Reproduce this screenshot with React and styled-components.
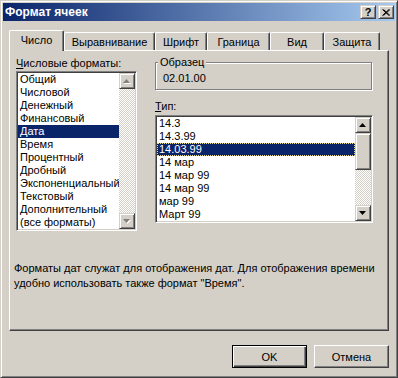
import React from "react";
import styled, { createGlobalStyle } from "styled-components";

const GlobalStyle = createGlobalStyle`
  html, body {
    margin: 0;
    padding: 0;
    background: #d4d0c8;
  }
  body {
    font-family: "Liberation Sans", Arial, sans-serif;
    font-size: 11px;
    color: #000;
  }
  * {
    box-sizing: border-box;
  }
`;

const Window = styled.div`
  width: 398px;
  height: 378px;
  background: #d4d0c8;
  border: 1px solid;
  border-color: #d4d0c8 #404040 #404040 #d4d0c8;
  box-shadow: inset 1px 1px 0 #fff, inset -1px -1px 0 #808080;
  padding: 2px;
  display: flex;
  flex-direction: column;
`;

const TitleBar = styled.div`
  height: 18px;
  display: flex;
  align-items: center;
  padding: 0 1px 0 2px;
  background: linear-gradient(to right, #0a246a, #a6caf0);
  color: #fff;
  font-weight: bold;
`;

const Title = styled.span`
  flex: 1;
  font-size: 12px;
  line-height: 13px;
`;

const CaptionButtons = styled.div`
  display: flex;
  gap: 2px;
`;

const CaptionButton = styled.div`
  width: 16px;
  height: 14px;
  display: flex;
  align-items: center;
  justify-content: center;
  background: #d4d0c8;
  color: #000;
  font-weight: bold;
  font-size: 11px;
  line-height: 11px;
  border: 1px solid;
  border-color: #d4d0c8 #404040 #404040 #d4d0c8;
  box-shadow: inset 1px 1px 0 #fff, inset -1px -1px 0 #808080;
`;

const Body = styled.div`
  flex: 1;
  display: flex;
  flex-direction: column;
  padding: 9px 6px 0;
`;

const TabStrip = styled.div`
  display: flex;
  align-items: flex-end;
  height: 20px;
`;

const Tab = styled.div`
  width: ${(p) => p.$w}px;
  height: ${(p) => (p.$active ? 21 : 18)}px;
  margin-bottom: ${(p) => (p.$active ? -1 : 0)}px;
  position: relative;
  z-index: ${(p) => (p.$active ? 2 : 0)};
  background: #d4d0c8;
  border-top: 1px solid #fff;
  border-left: 1px solid #fff;
  border-right: 1px solid #404040;
  box-shadow: inset -1px 0 0 #808080;
  border-radius: 2px 2px 0 0;
  padding-top: 3px;
  text-align: center;
  line-height: 13px;
  white-space: nowrap;
`;

const Panel = styled.div`
  height: 281px;
  border: 1px solid;
  border-color: #fff #404040 #404040 #fff;
  box-shadow: inset -1px -1px 0 #808080;
  padding: 6px 0 0 4px;
`;

const Columns = styled.div`
  display: grid;
  grid-template-columns: 121px 218px;
  column-gap: 18px;
  margin-left: 2px;
  align-items: start;
`;

const Column = styled.div`
  display: flex;
  flex-direction: column;
`;

const Label = styled.div`
  line-height: 13px;
  margin: ${(p) => p.$m || "0"};
  white-space: nowrap;
  u {
    text-decoration: underline;
    text-underline-offset: 1px;
  }
`;

const GroupBox = styled.div`
  position: relative;
  height: 28px;
  width: 217px;
  margin-top: 5px;
  border: 1px solid #808080;
  box-shadow: inset 1px 1px 0 #fff, 1px 1px 0 #fff;
  padding: 9px 0 0 7px;
  line-height: 13px;
`;

const GroupCaption = styled.span`
  position: absolute;
  top: -7px;
  left: 2px;
  padding: 0 2px;
  background: #d4d0c8;
  line-height: 13px;
`;

const ListBox = styled.div`
  height: ${(p) => p.$h}px;
  display: flex;
  background: #fff;
  border: 1px solid;
  border-color: #808080 #fff #fff #808080;
  box-shadow: inset 1px 1px 0 #404040, inset -1px -1px 0 #d4d0c8;
  padding: 1px;
`;

const Items = styled.div`
  flex: 1;
  display: flex;
  flex-direction: column;
  overflow: hidden;
`;

const Item = styled.div`
  height: 13px;
  line-height: 13px;
  padding-left: 2px;
  white-space: nowrap;
  background: ${(p) => (p.$selected ? "#0a246a" : "transparent")};
  color: ${(p) => (p.$selected ? "#fff" : "#000")};
  outline: ${(p) => (p.$focus ? "1px dotted #e8dc8c" : "none")};
  outline-offset: -1px;
`;

const ScrollBar = styled.div`
  width: 16px;
  display: flex;
  flex-direction: column;
`;

const ScrollButton = styled.div`
  width: 16px;
  height: 16px;
  display: flex;
  align-items: center;
  justify-content: center;
  background: #d4d0c8;
  border: 1px solid;
  border-color: #d4d0c8 #404040 #404040 #d4d0c8;
  box-shadow: inset 1px 1px 0 #fff, inset -1px -1px 0 #808080;
`;

const Thumb = styled(ScrollButton)`
  height: ${(p) => p.$h}px;
`;

const Track = styled.div`
  flex: 1;
  background-color: #fff;
  background-image: repeating-conic-gradient(#d4d0c8 0 25%, #fff 0 50%);
  background-size: 2px 2px;
`;

const Description = styled.p`
  margin: 30px 0 0;
  line-height: 15px;
`;

const Footer = styled.div`
  display: flex;
  justify-content: flex-end;
  gap: 7px;
  margin-top: 14px;
`;

const Button = styled.div`
  width: 75px;
  height: 23px;
  display: flex;
  align-items: center;
  justify-content: center;
  background: #d4d0c8;
  border: 1px solid;
  border-color: ${(p) => (p.$default ? "#000" : "#fff #404040 #404040 #fff")};
  box-shadow: ${(p) =>
    p.$default
      ? "inset 1px 1px 0 #fff, inset -1px -1px 0 #404040, inset -2px -2px 0 #808080"
      : "inset -1px -1px 0 #808080"};
`;

function Arrow({ down, disabled }) {
  const pts = down ? "0,0 7,0 3.5,4" : "0,4 7,4 3.5,0";
  return (
    <svg width="8" height="5" viewBox="0 0 8 5" style={{ marginTop: down ? 1 : 0 }}>
      {disabled && <polygon points={pts} fill="#fff" transform="translate(1,1)" />}
      <polygon points={pts} fill={disabled ? "#808080" : "#000"} />
    </svg>
  );
}

const formats = [
  "Общий",
  "Числовой",
  "Денежный",
  "Финансовый",
  "Дата",
  "Время",
  "Процентный",
  "Дробный",
  "Экспоненциальный",
  "Текстовый",
  "Дополнительный",
  "(все форматы)",
];

const types = [
  "14.3",
  "14.3.99",
  "14.03.99",
  "14 мар",
  "14 мар 99",
  "14 мар 99",
  "мар 99",
  "Март 99",
];

const tabs = [
  ["Число", 55],
  ["Выравнивание", 91],
  ["Шрифт", 52],
  ["Граница", 63],
  ["Вид", 54],
  ["Защита", 56],
];

export default function App() {
  return (
    <>
      <GlobalStyle />
      <Window>
        <TitleBar>
          <Title>Формат ячеек</Title>
          <CaptionButtons>
            <CaptionButton>?</CaptionButton>
            <CaptionButton>
              <svg width="8" height="7" viewBox="0 0 8 7">
                <path d="M0.5 0.5 L7 6.5 M1.5 0.5 L8 6.5 M7 0.5 L0.5 6.5 M8 0.5 L1.5 6.5" stroke="#000" strokeWidth="1" />
              </svg>
            </CaptionButton>
          </CaptionButtons>
        </TitleBar>
        <Body>
          <TabStrip>
            {tabs.map(([name, w], i) => (
              <Tab key={name} $w={w} $active={i === 0}>
                {name}
              </Tab>
            ))}
          </TabStrip>
          <Panel>
            <Columns>
              <Column>
                <Label $m="0 0 1px">
                  <u>Ч</u>исловые форматы:
                </Label>
                <ListBox $h={160}>
                  <Items>
                    {formats.map((f) => (
                      <Item key={f} $selected={f === "Дата"}>
                        {f}
                      </Item>
                    ))}
                  </Items>
                  <ScrollBar>
                    <ScrollButton>
                      <Arrow disabled />
                    </ScrollButton>
                    <Track />
                    <ScrollButton>
                      <Arrow down disabled />
                    </ScrollButton>
                  </ScrollBar>
                </ListBox>
              </Column>
              <Column>
                <GroupBox>
                  <GroupCaption>Образец</GroupCaption>
                  02.01.00
                </GroupBox>
                <Label $m="10px 0 2px">
                  <u>Т</u>ип:
                </Label>
                <ListBox $h={108}>
                  <Items>
                    {types.map((t, i) => (
                      <Item key={i} $selected={i === 2} $focus={i === 2}>
                        {t}
                      </Item>
                    ))}
                  </Items>
                  <ScrollBar>
                    <ScrollButton>
                      <Arrow />
                    </ScrollButton>
                    <Thumb $h={37} />
                    <Track />
                    <ScrollButton>
                      <Arrow down />
                    </ScrollButton>
                  </ScrollBar>
                </ListBox>
              </Column>
            </Columns>
            <Description>
              Форматы дат служат для отображения дат. Для отображения времени
              <br />
              удобно использовать также формат "Время".
            </Description>
          </Panel>
          <Footer>
            <Button $default>OK</Button>
            <Button>Отмена</Button>
          </Footer>
        </Body>
      </Window>
    </>
  );
}
